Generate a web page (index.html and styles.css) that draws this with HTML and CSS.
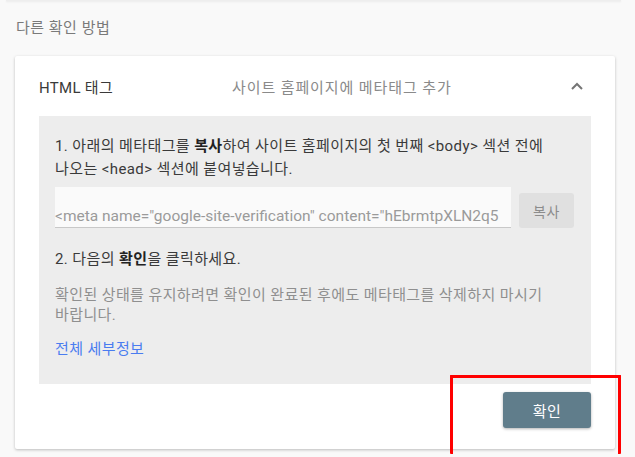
FILE: index.html
```html
<!DOCTYPE html>
<html lang="ko">
<head>
<meta charset="utf-8">
<link rel="stylesheet" href="styles.css">
</head>
<body>
<div class="prev-card"></div>
<h2 class="section-title">다른 확인 방법</h2>
<div class="card">
  <div class="card-header">
    <span class="method">HTML 태그</span>
    <span class="method-desc">사이트 홈페이지에 메타태그 추가</span>
    <svg class="chevron" width="14" height="10" viewBox="0 0 14 10"><path d="M2 8 L7 3 L12 8" fill="none" stroke="#757575" stroke-width="2"/></svg>
  </div>
  <div class="panel">
    <p class="step">1. 아래의 메타태그를 <b>복사</b>하여 사이트 홈페이지의 첫 번째 &lt;body&gt; 섹션 전에 나오는 &lt;head&gt; 섹션에 붙여넣습니다.</p>
    <div class="copy-row">
      <div class="code-field">&lt;meta name="google-site-verification" content="hEbrmtpXLN2q5</div>
      <button class="copy-btn">복사</button>
    </div>
    <p class="step step2">2. 다음의 <b>확인</b>을 클릭하세요.</p>
    <p class="note">확인된 상태를 유지하려면 확인이 완료된 후에도 메타태그를 삭제하지 마시기 바랍니다.</p>
    <a class="details" href="#">전체 세부정보</a>
  </div>
  <div class="card-footer">
    <button class="verify-btn">확인</button>
  </div>
</div>
<div class="highlight"></div>
</body>
</html>
```

FILE: styles.css
```css
html, body {
  margin: 0;
  padding: 0;
}
body {
  background: #f9f9f9;
  font-family: Roboto, "Noto Sans CJK KR", sans-serif;
  font-size: 15px;
  letter-spacing: 0.4px;
  color: #3c3c3c;
  width: 635px;
  height: 457px;
  overflow: hidden;
  position: relative;
  word-break: keep-all;
}
.prev-card {
  height: 1px;
  margin: 0 14px 0 6px;
  background: #eeeeee;
  box-shadow: 0 1px 2px rgba(0,0,0,0.08);
}
.section-title {
  margin: 0;
  padding: 17px 0 0 16px;
  height: 38px;
  box-sizing: border-box;
  font-size: 15px;
  letter-spacing: 0.5px;
  font-weight: 400;
  color: #7a7a7a;
  line-height: 20px;
}
.card {
  margin: 17px 0 0 15px;
  width: 600px;
  height: 393px;
  background: #ffffff;
  border-radius: 2px;
  box-shadow: 0 1px 3px rgba(0,0,0,0.25);
  display: flex;
  flex-direction: column;
}
.card-header {
  height: 60px;
  display: flex;
  align-items: center;
  padding: 0 24px;
}
.method {
  width: 193px;
  color: #3a3a3a;
  font-size: 15px;
  letter-spacing: 0.3px;
}
.method-desc {
  flex: 1;
  color: #8a8a8a;
  font-size: 15px;
  letter-spacing: 0.9px;
}
.chevron {
  margin-right: 7px;
}
.panel {
  margin: 0 24px;
  height: 268px;
  box-sizing: border-box;
  background: #ededed;
  padding: 19px 16px 0 16px;
}
.step {
  margin: 0;
  line-height: 23px;
  color: #3a3a3a;
}
.step b {
  font-weight: 700;
  color: #222;
}
.copy-row {
  display: flex;
  align-items: flex-end;
  gap: 8px;
  margin-top: 6px;
}
.code-field {
  width: 456px;
  flex: none;
  height: 41px;
  box-sizing: border-box;
  background: #fafafa;
  border-bottom: 1px solid #c8c8c8;
  color: #9a9a9a;
  font-size: 15.5px;
  letter-spacing: 0;
  line-height: 20px;
  padding-top: 19px;
  white-space: nowrap;
  overflow: hidden;
}
.copy-btn {
  width: 55px;
  height: 35px;
  border: none;
  border-radius: 3px;
  background: #e0e0e0;
  color: #8c8c8c;
  font-family: inherit;
  font-size: 14px;
  letter-spacing: 0.5px;
  padding: 0;
}
.step2 {
  margin-top: 20px;
}
.note {
  margin: 14px 0 0 0;
  line-height: 20px;
  color: #8f8f8f;
}
.details {
  display: inline-block;
  margin-top: 13px;
  color: #4a7cf0;
  text-decoration: none;
  line-height: 22px;
}
.card-footer {
  display: flex;
  justify-content: flex-end;
  padding: 8px 24px 0 0;
}
.verify-btn {
  width: 88px;
  height: 36px;
  border: none;
  border-radius: 3px;
  background: #607d8b;
  color: #ffffff;
  font-family: inherit;
  font-size: 15px;
  letter-spacing: 0.5px;
  box-shadow: 0 1px 3px rgba(0,0,0,0.3);
}
.highlight {
  position: absolute;
  left: 450px;
  top: 375px;
  width: 165px;
  height: 76px;
  border: 3px solid #ff0000;
  border-bottom: none;
  border-radius: 1px;
}
```
